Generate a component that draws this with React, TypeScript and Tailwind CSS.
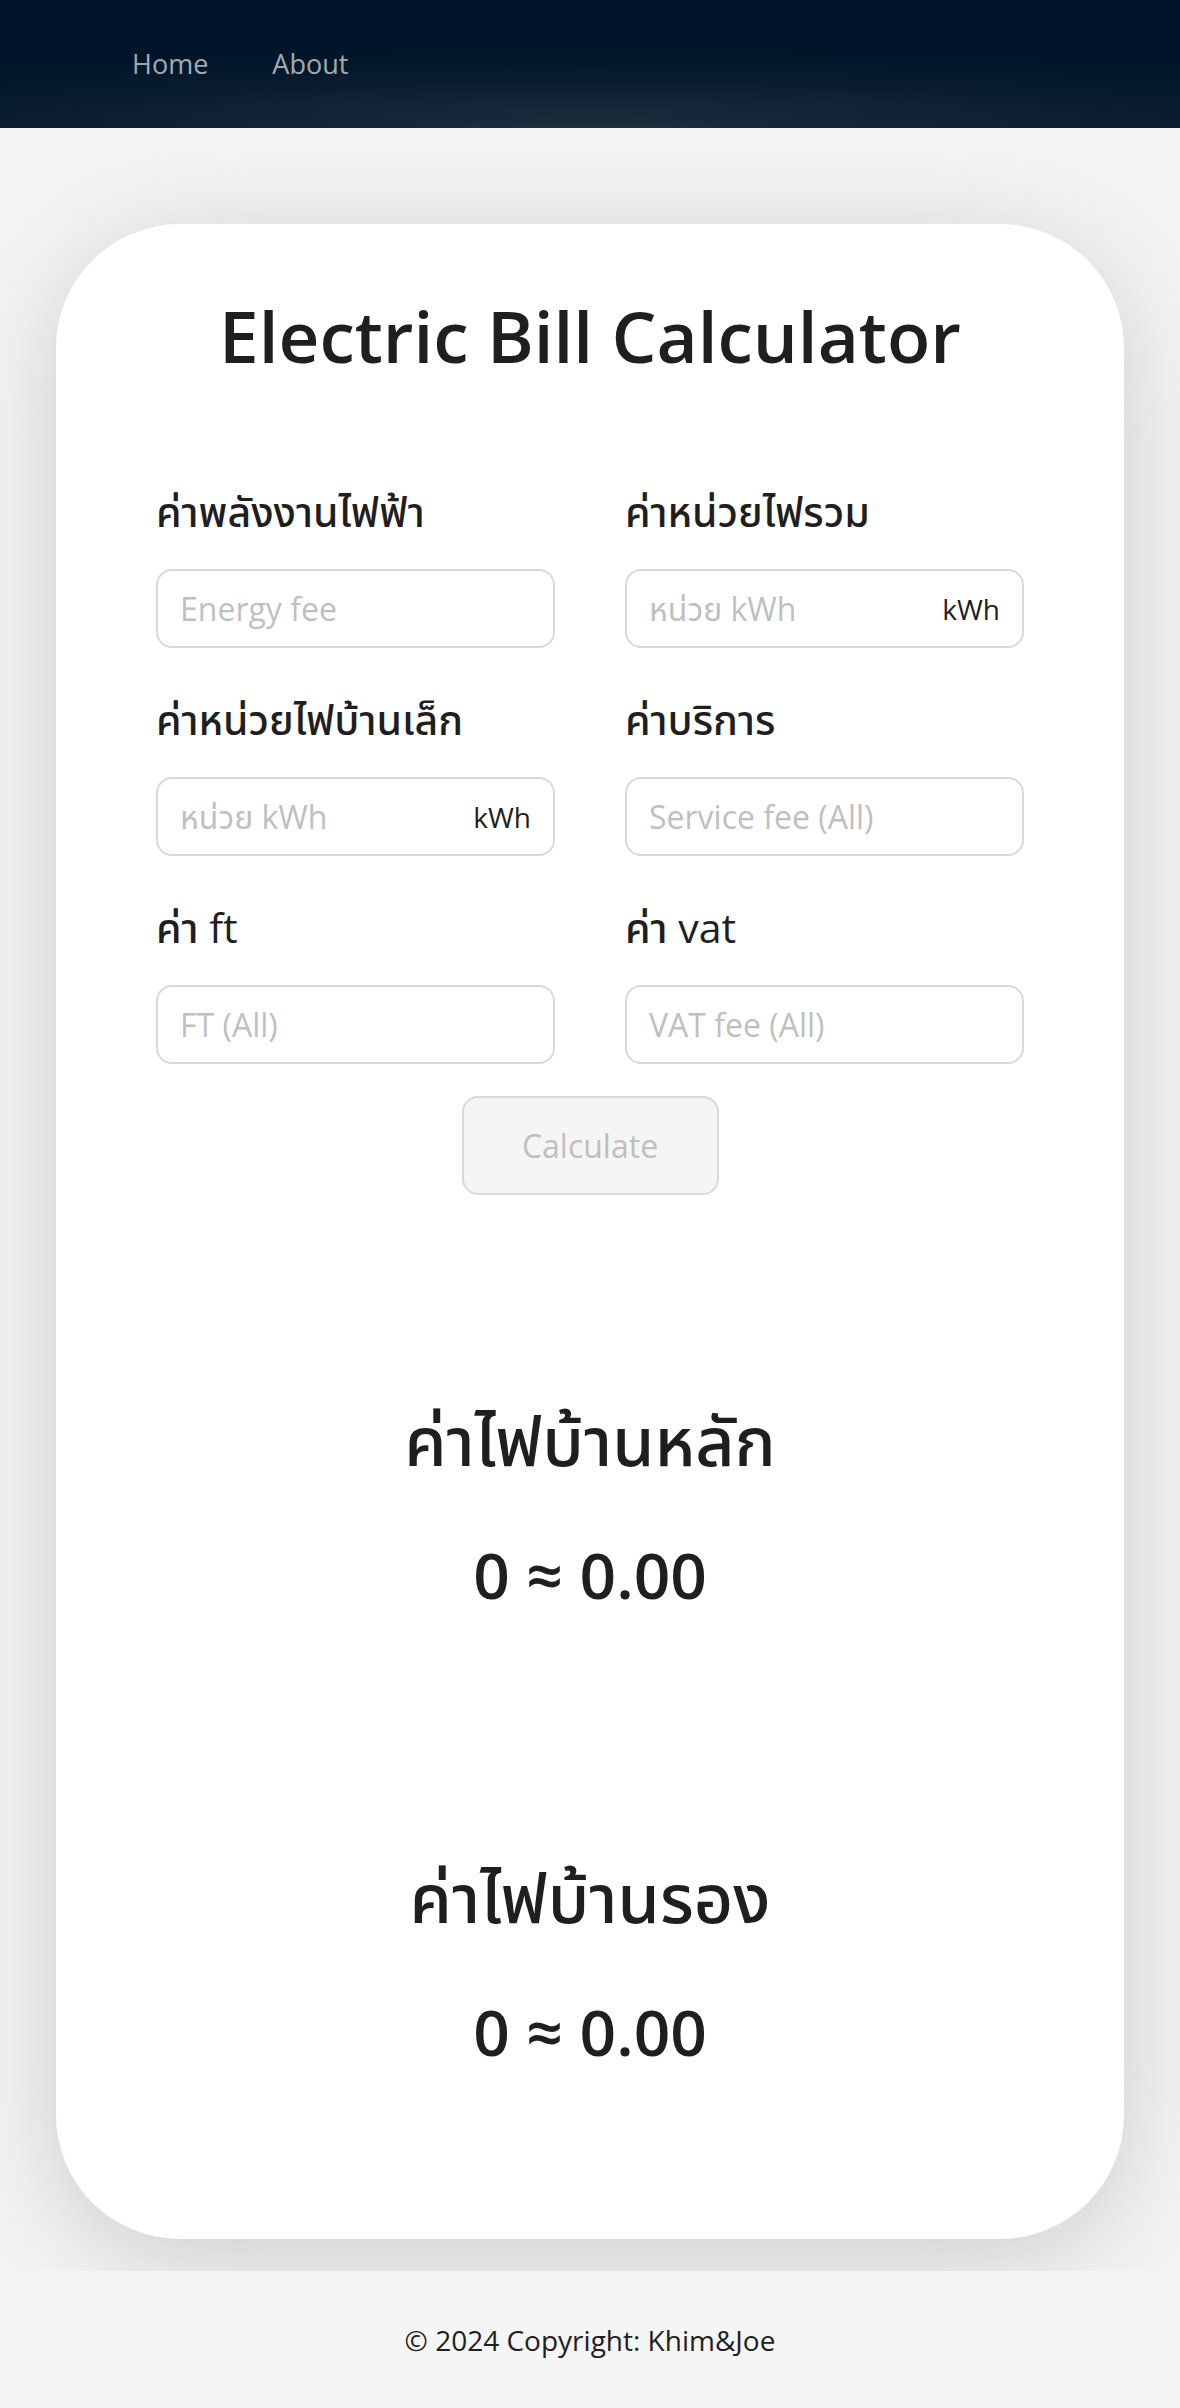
import { useState } from 'react';

const font = { fontFamily: '"Open Sans", "Noto Sans Thai", "Noto Sans", "DejaVu Sans", sans-serif' };

type Field = {
  label: string;
  placeholder: string;
  suffix?: string;
};

const fields: Field[] = [
  { label: 'ค่าพลังงานไฟฟ้า', placeholder: 'Energy fee' },
  { label: 'ค่าหน่วยไฟรวม', placeholder: 'หน่วย kWh', suffix: 'kWh' },
  { label: 'ค่าหน่วยไฟบ้านเล็ก', placeholder: 'หน่วย kWh', suffix: 'kWh' },
  { label: 'ค่าบริการ', placeholder: 'Service fee (All)' },
  { label: 'ค่า ft', placeholder: 'FT (All)' },
  { label: 'ค่า vat', placeholder: 'VAT fee (All)' },
];

function FormField({ field, value, onChange }: { field: Field; value: string; onChange: (v: string) => void }) {
  return (
    <div className="flex flex-col">
      <label className="mb-[38px] block h-[40px] text-[41px] leading-[40px] font-medium text-[#1f1f1f]">
        {field.label}
      </label>
      <div className="flex h-[79px] items-center rounded-[16px] border-2 border-[#d9d9d9] bg-white px-[22px]">
        <input
          value={value}
          onChange={(e) => onChange(e.target.value)}
          placeholder={field.placeholder}
          className="min-w-0 flex-1 bg-transparent text-[32px] text-[#1f1f1f] outline-none placeholder:text-[#bfbfbf]"
          style={font}
        />
        {field.suffix && <span className="ml-2 text-[28px] text-[#1f1f1f]">{field.suffix}</span>}
      </div>
    </div>
  );
}

function Result({ title, units, amount }: { title: string; units: number; amount: number }) {
  return (
    <div className="flex flex-col items-center">
      <h2 className="text-[68px] leading-[80px] font-medium text-[#1f1f1f]">{title}</h2>
      <p className="mt-[55px] text-[64px] leading-[80px] font-semibold text-[#1f1f1f]">
        {units} ≈ {amount.toFixed(2)}
      </p>
    </div>
  );
}

export default function App() {
  const [values, setValues] = useState<string[]>(fields.map(() => ''));
  const canCalculate = values.every((v) => v.trim() !== '');

  return (
    <div className="flex min-h-screen flex-col bg-[#f5f5f5]" style={font}>
      <nav className="flex h-[128px] items-center bg-[radial-gradient(ellipse_80%_60%_at_50%_100%,#1f2e3f_0%,#0a1d30_60%,#001529_100%)] px-[100px]">
        {['Home', 'About'].map((item) => (
          <a key={item} href="#" className="px-[32px] text-[27px] leading-[128px] text-[rgba(255,255,255,0.65)]">
            {item}
          </a>
        ))}
      </nav>

      <main className="px-[56px] pt-[96px] pb-[32px]">
        <div className="rounded-[124px] bg-white px-[100px] pt-[76px] pb-[167px] shadow-[0_20px_110px_rgba(170,170,170,0.55)]">
          <h1 className="text-center text-[71px] leading-[72px] font-semibold text-[#1f1f1f]">
            Electric Bill Calculator
          </h1>

          <div className="mt-[119px] grid grid-cols-2 gap-x-[70px] gap-y-[51px]">
            {fields.map((f, i) => (
              <FormField
                key={f.label}
                field={f}
                value={values[i]}
                onChange={(v) => setValues((prev) => prev.map((p, j) => (j === i ? v : p)))}
              />
            ))}
          </div>

          <div className="mt-[32px] flex justify-center">
            <button
              disabled={!canCalculate}
              className="h-[99px] w-[257px] rounded-[16px] border-2 border-[#d9d9d9] bg-[#f5f5f5] text-[32px] text-[#bfbfbf]"
            >
              Calculate
            </button>
          </div>

          <div className="mt-[205px] flex flex-col gap-[242px]">
            <Result title="ค่าไฟบ้านหลัก" units={0} amount={0} />
            <Result title="ค่าไฟบ้านรอง" units={0} amount={0} />
          </div>
        </div>
      </main>

      <footer className="bg-[#f5f5f5] py-[47px] text-center text-[28px] leading-[44px] text-[#1f1f1f]">
        © 2024 Copyright: Khim&amp;Joe
      </footer>
    </div>
  );
}
